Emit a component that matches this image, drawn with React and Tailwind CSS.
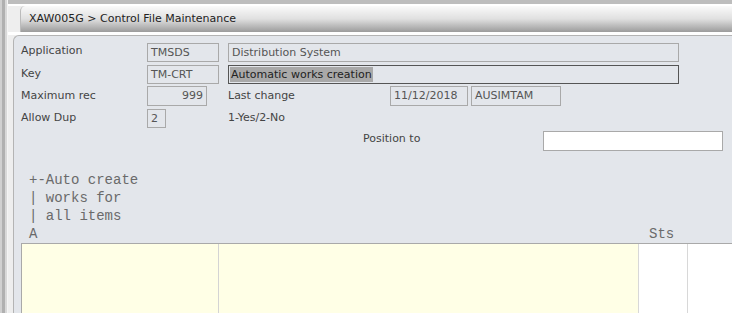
export default function App() {
  const f = { fontFamily: '"DejaVu Sans", Verdana, sans-serif' };
  const mono = { fontFamily: '"Liberation Mono", "Courier New", monospace' };
  const box = "h-[19px] border border-[#a9a9a9] flex items-center px-[3px] pt-[1px] text-[#555] shrink-0";
  return (
    <div className="w-[732px] h-[313px] overflow-hidden flex bg-[#eeeeee] text-[11px]" style={f}>
      <div className="w-[8px] shrink-0 flex">
        <div className="w-[2px] bg-[#d0d0d0]" />
        <div className="w-[3px] bg-[#b0b0b0]" />
        <div className="w-[2px] bg-[#d8d8d8]" />
        <div className="w-[1px] bg-[#f4f4f4]" />
      </div>
      <div className="flex-1 flex flex-col min-w-0">
        <div className="h-[4px] bg-[#bdbdbd] shrink-0" />
        <div className="h-[2px] bg-[#ffffff] shrink-0" />
        <div className="ml-[12px] h-[26px] shrink-0 rounded-tl-[5px] bg-gradient-to-b from-[#fafafa] via-[#e0e0e0] to-[#9c9c9c] flex items-center pl-[8px] text-[11px] text-[#222] border-l border-[#bbbbbb]">
          XAW005G &gt; Control File Maintenance
        </div>
        <div className="h-[3px] bg-[#ffffff] shrink-0" />
        <div className="ml-[5px] flex-1 bg-[#e3e6eb] border-l border-t border-[#b4b4b4] rounded-tl-[6px] pl-[7px] pt-[7px] flex flex-col text-[#444]">
          <div className="flex items-center h-[19px]">
            <div className="w-[126px] shrink-0 self-start">Application</div>
            <div className={box + " w-[72px]"}>TMSDS</div>
            <div className={box + " w-[451px] ml-[9px]"}>Distribution System</div>
          </div>
          <div className="flex items-center h-[19px] mt-[3px]">
            <div className="w-[126px] shrink-0">Key</div>
            <div className={box + " w-[72px]"}>TM-CRT</div>
            <div className="h-[19px] w-[451px] ml-[9px] border border-[#555] flex items-center px-[1px] text-[#222]">
              <span className="bg-[#a9a9a9] px-[1px] leading-[15px]">Automatic works creation</span>
            </div>
          </div>
          <div className="flex items-center h-[20px] mt-[2px]">
            <div className="w-[126px] shrink-0">Maximum rec</div>
            <div className={box + " w-[60px] h-[20px] justify-end"}>999</div>
            <div className="ml-[21px] w-[162px] shrink-0">Last change</div>
            <div className={box + " w-[78px] h-[20px]"}>11/12/2018</div>
            <div className={box + " w-[90px] h-[20px] ml-[3px]"}>AUSIMTAM</div>
          </div>
          <div className="flex items-center h-[19px] mt-[3px]">
            <div className="w-[126px] shrink-0">Allow Dup</div>
            <div className={box + " w-[19px]"}>2</div>
            <div className="ml-[62px]">1-Yes/2-No</div>
          </div>
          <div className="flex items-center h-[20px] mt-[3px]">
            <div className="ml-[342px] w-[180px] shrink-0 -mt-[4px]">Position to</div>
            <div className="w-[180px] h-[20px] bg-white border border-[#a9a9a9] shrink-0" />
          </div>
          <div className="mt-[20px] pl-[8px] text-[14px] leading-[18px] text-[#6a6a6a] whitespace-pre" style={mono}>
            <div>+-Auto create</div>
            <div>| works for</div>
            <div>| all items</div>
            <div className="flex">
              <span className="w-[620px]">A</span>
              <span>Sts</span>
            </div>
          </div>
          <div className="flex-1 flex border-t border-l border-[#a9a9a9]">
            <div className="w-[197px] bg-[#ffffe6] border-r border-[#d4d4d4]" />
            <div className="w-[419px] bg-[#ffffe6]" />
            <div className="w-[50px] bg-white border-l border-r border-[#d8d8d8]" />
            <div className="flex-1 bg-white" />
          </div>
        </div>
      </div>
    </div>
  );
}
